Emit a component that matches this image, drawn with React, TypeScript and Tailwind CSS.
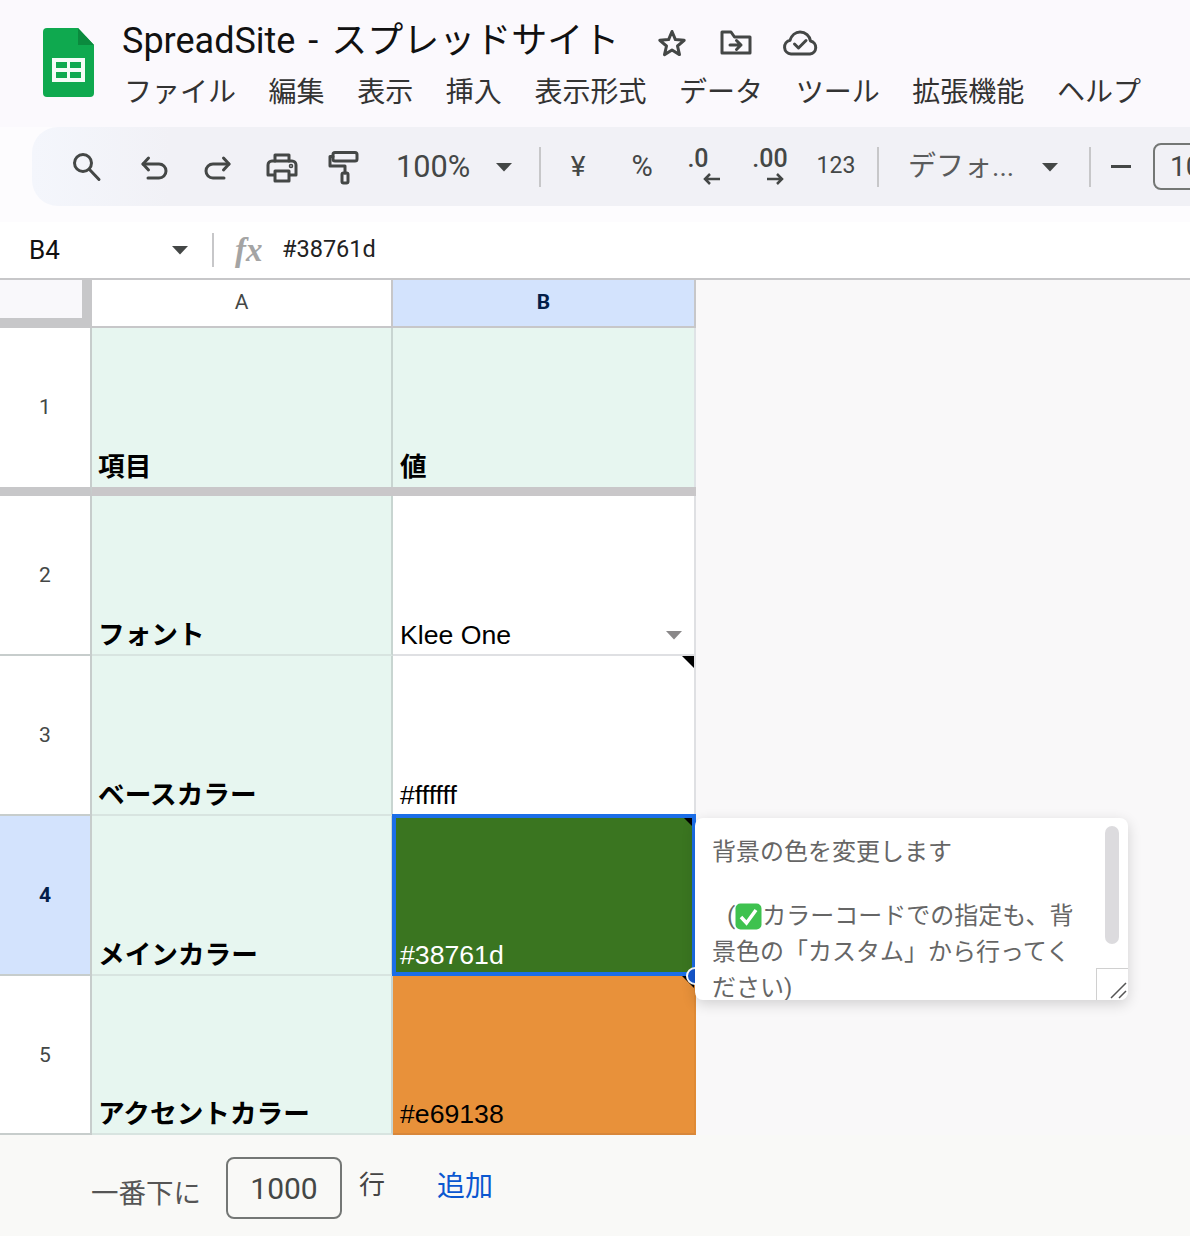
import React from "react";

const sans = "font-['Roboto','Noto_Sans_CJK_JP',sans-serif]";
const cellFont = "font-['Liberation_Sans','Noto_Sans_CJK_JP',sans-serif]";

function Tri({ className = "" }: { className?: string }) {
  return (
    <svg width="18" height="10" viewBox="0 0 18 10" className={className}>
      <path d="M1 1h16l-8 8.5z" fill="currentColor" />
    </svg>
  );
}

function Ic({ children }: { children: React.ReactNode }) {
  return (
    <svg width={34} height={34} viewBox="0 0 34 34" fill="none" stroke="#444746" strokeWidth="3" strokeLinecap="round" strokeLinejoin="round">
      {children}
    </svg>
  );
}

function Sep() {
  return <div className="w-[2px] h-[40px] bg-[#c7c7c9] shrink-0" />;
}

function Slot({ w, children, className = "" }: { w: number; children: React.ReactNode; className?: string }) {
  return (
    <div style={{ width: w }} className={`flex items-center justify-center shrink-0 ${className}`}>
      {children}
    </div>
  );
}

function Header() {
  const menus = ["ファイル", "編集", "表示", "挿入", "表示形式", "データ", "ツール", "拡張機能", "ヘルプ"];
  return (
    <div className="h-[127px] flex bg-[#fbf9fd] pl-[43px] pt-[28px] shrink-0">
      <svg width="51" height="69" viewBox="0 0 51 69" className="shrink-0">
        <path d="M4 0h31l16 17v48a4 4 0 0 1-4 4H4a4 4 0 0 1-4-4V4a4 4 0 0 1 4-4z" fill="#0fa94f" />
        <path d="M35 0l16 17H35z" fill="#0b8a3e" />
        <path d="M9 30h33v24H9z" fill="#f4fbf6" />
        <path d="M13 34h11v6H13zM27 34h11v6H27zM13 44h11v6H13zM27 44h11v6H27z" fill="#0fa94f" />
      </svg>
      <div className="ml-[28px] flex flex-col">
        <div className="flex items-center h-[32px] mt-[-3px]">
          <span className={`${sans} text-[36px] [word-spacing:4px] leading-[40px] text-[#111] whitespace-nowrap w-[491px]`}>SpreadSite - スプレッドサイト</span>
          <div className="flex items-center ml-[44px] mt-[4px]">
            <svg width="30" height="30" viewBox="0 0 30 30" fill="none" stroke="#444746" strokeWidth="3" strokeLinejoin="round">
              <path d="M15 3.500l3.400 8.100 8.800.7-6.700 5.700 2 8.600-7.500-4.600-7.500 4.600 2-8.600-6.700-5.700 8.800-.7z" />
            </svg>
            <svg width="32" height="26" viewBox="0 0 32 26" fill="none" stroke="#444746" strokeWidth="3" strokeLinejoin="round" strokeLinecap="round" className="ml-[33px]">
              <path d="M2 3v20h28V7H14.500L11 2H2z" />
              <path d="M10 15h11M16.500 10.500l4.500 4.500-4.500 4.500" />
            </svg>
            <svg width="36" height="26" viewBox="0 0 36 26" fill="none" stroke="#444746" strokeWidth="3" strokeLinejoin="round" strokeLinecap="round" className="ml-[30px]">
              <path d="M9 24a7 7 0 0 1-1-13.800C9.500 5.500 13.500 2 18 2c5.500 0 9.800 4 10.500 9a6.600 6.600 0 0 1-.5 13z" />
              <path d="M12.500 14l4 4 7.500-7.500" />
            </svg>
          </div>
        </div>
        <div className={`${sans} flex gap-[32.600px] text-[28px] leading-[40px] text-[#333] ml-[2px] mt-[16px] whitespace-nowrap`}>
          {menus.map((m) => (
            <span key={m}>{m}</span>
          ))}
        </div>
      </div>
    </div>
  );
}

function Toolbar() {
  return (
    <div className="h-[95px] bg-[#fdfcfe] pl-[32px] shrink-0">
      <div className={`${sans} h-[79px] bg-[linear-gradient(90deg,#f4f6fc,#f1f1f6_12%)] rounded-l-[26px] flex items-center pl-[32px] overflow-hidden whitespace-nowrap text-[#444746]`}>
        <Slot w={44}>
          <Ic>
            <circle cx="14" cy="13" r="8.500" />
            <path d="M20.500 19.500L30 29.500" />
          </Ic>
        </Slot>
        <Slot w={64} className="ml-[14px] mt-[4px]">
          <Ic>
            <path d="M6 12h16a6.500 6.500 0 0 1 0 14H11" />
            <path d="M11.500 6L6 12l5.500 6" />
          </Ic>
        </Slot>
        <Slot w={64} className="mt-[4px]">
          <Ic>
            <path d="M28 12H12a6.500 6.500 0 0 0 0 14h11" />
            <path d="M22.500 6L28 12l-5.500 6" />
          </Ic>
        </Slot>
        <Slot w={64} className="mt-[2px]">
          <Ic>
            <path d="M10 10V4h14v6" />
            <path d="M9 24H3V14a4 4 0 0 1 4-4h20a4 4 0 0 1 4 4v10h-6" />
            <path d="M10 20h14v10H10z" />
            <circle cx="26" cy="15" r=".8" />
          </Ic>
        </Slot>
        <Slot w={62} className="mt-[2px]">
          <Ic>
            <rect x="5" y="1.500" width="24" height="8.500" rx="2" />
            <path d="M5 5.500H2V15h15v7" />
            <rect x="14" y="22" width="6" height="10" rx="1.500" />
          </Ic>
        </Slot>
        <span className="text-[30.700px] ml-[20px] w-[73px] mt-[2px] shrink-0">100%</span>
        <Slot w={70}>
          <Tri />
        </Slot>
        <Sep />
        <span className="text-[28px] w-[74px] text-center shrink-0">¥</span>
        <span className="text-[29px] w-[54px] text-center shrink-0">%</span>
        <div className="w-[66px] flex flex-col items-center shrink-0">
          <span className="text-[25px] leading-[24px] font-medium ml-[-8px]">.0</span>
          <svg width="20" height="14" viewBox="0 0 20 14" fill="none" stroke="#444746" strokeWidth="2.500" className="ml-[20px] mt-[1px]">
            <path d="M18 7H3M8 2L3 7l5 5" />
          </svg>
        </div>
        <div className="w-[70px] flex flex-col items-center shrink-0">
          <span className="text-[25px] leading-[24px] font-medium">.00</span>
          <svg width="20" height="14" viewBox="0 0 20 14" fill="none" stroke="#444746" strokeWidth="2.500" className="ml-[10px] mt-[1px]">
            <path d="M2 7h15M12 2l5 5-5 5" />
          </svg>
        </div>
        <span className="text-[23px] w-[62px] mr-[10px] text-center shrink-0">123</span>
        <Sep />
        <span className="text-[28px] ml-[29px] w-[105px] text-[#5a5b5c] shrink-0">デフォ...</span>
        <Slot w={64} className="ml-[5px]">
          <Tri />
        </Slot>
        <div className="ml-[7px]">
          <Sep />
        </div>
        <div className="w-[20px] h-[3px] bg-[#444746] ml-[20px] shrink-0" />
        <div className="ml-[22px] w-[80px] h-[47px] border-2 border-[#747775] rounded-[8px] text-[28px] leading-[43px] pl-[15px] shrink-0">10</div>
      </div>
    </div>
  );
}

function FormulaBar() {
  return (
    <div className="h-[58px] bg-white border-b-2 border-[#c7c7c9] flex items-center shrink-0">
      <span className={`${sans} text-[26px] text-[#111] ml-[29px] w-[142px]`}>B4</span>
      <Tri className="text-[#444746]" />
      <div className="w-[2px] h-[34px] bg-[#c7c7c9] ml-[23px]" />
      <span className="font-['Liberation_Serif',serif] italic font-bold text-[33px] leading-[40px] text-[#a4a4a4] ml-[21px] w-[47px]">fx</span>
      <span className={`${sans} text-[23.500px] text-[#222]`}>#38761d</span>
    </div>
  );
}

function Note() {
  return (
    <svg width="12" height="12" viewBox="0 0 12 12" className="absolute top-0 right-0">
      <path d="M0 0h12v12z" fill="#000" />
    </svg>
  );
}

function Cell({
  text,
  bold,
  bg,
  color = "#000",
  note,
  borderRight = "#c8d5d1",
  borderBottom = "#d8e4e0",
  colB,
  band,
  children,
}: {
  text: string;
  bold?: boolean;
  bg: string;
  color?: string;
  note?: boolean;
  borderRight?: string;
  borderBottom?: string;
  colB?: boolean;
  band?: boolean;
  children?: React.ReactNode;
}) {
  return (
    <div
      style={{ backgroundColor: bg, color, borderRightColor: borderRight, borderBottomColor: borderBottom }}
      className={`${cellFont} relative flex items-end ${colB ? "pl-[7px]" : "pl-[6px]"} ${band ? "pb-[9px]" : "pb-[1px]"} border-r-2 border-b-2 text-[26.670px] leading-[36px] whitespace-nowrap ${bold ? "font-bold" : ""}`}
    >
      {text}
      {note && <Note />}
      {children}
    </div>
  );
}

function RowHead({ n, active }: { n: number; active?: boolean }) {
  return (
    <div
      className={`${sans} flex items-center justify-center border-r-2 border-b-2 border-[#c7cdcc] text-[21px] pt-[2px] ${
        active ? "bg-[#d3e3fd] text-[#041e49] font-bold" : "bg-white text-[#444746]"
      }`}
    >
      {n}
    </div>
  );
}

function Grid() {
  const mint = "#e7f6f0";
  return (
    <div className="flex flex-1 min-h-0 bg-[#f9f8f9]">
      <div className="relative">
        <div className="grid grid-cols-[92px_301px_303px] grid-rows-[48px_168px_160px_160px_160px_159px]">
          <div className="bg-[#c7c7c9] pr-[10px] pb-[10px]">
            <div className="h-full bg-[#f9f8fb]" />
          </div>
          <div className={`${sans} bg-white border-r-2 border-b-2 border-[#c7c7c9] flex items-center justify-center text-[21px] text-[#444746]`}>A</div>
          <div className={`${sans} bg-[#d3e3fd] border-r-2 border-b-2 border-[#c7c7c9] flex items-center justify-center text-[21px] font-bold text-[#041e49]`}>B</div>

          <div className="bg-white border-b-[9px] border-r-2 border-[#c7c7c9] border-r-[#c7cdcc]">
            <div className={`${sans} h-full flex items-center justify-center text-[21px] text-[#444746]`}>1</div>
          </div>
          <Cell text="項目" bold bg={mint} band borderBottom="#c7c7c9">
            <div className="absolute left-0 right-[-2px] bottom-[-2px] h-[9px] bg-[#c9c7c9]" />
          </Cell>
          <Cell text="値" bold bg={mint} band colB borderRight="#dfe3e6" borderBottom="#c7c7c9">
            <div className="absolute left-0 right-[-2px] bottom-[-2px] h-[9px] bg-[#c9c7c9]" />
          </Cell>

          <RowHead n={2} />
          <Cell text="フォント" bold bg={mint} />
          <Cell text="Klee One" colB bg="#fff" borderRight="#dfe0e3" borderBottom="#dfe0e3">
            <Tri className="absolute right-[11px] bottom-[14px] text-[#8a8889]" />
          </Cell>

          <RowHead n={3} />
          <Cell text="ベースカラー" bold bg={mint} />
          <Cell text="#ffffff" colB bg="#fff" note borderRight="#dfe0e3" borderBottom="#dfe0e3" />

          <RowHead n={4} active />
          <Cell text="メインカラー" bold bg={mint} />
          <Cell text="#38761d" colB bg="#3a7520" color="#fff" note borderRight="#3a7520" borderBottom="#3a7520">
            <div className="absolute inset-[-2px_-2px_-2px_-1px] border-[4px] border-[#1b6ee8]" />
          </Cell>

          <RowHead n={5} />
          <Cell text="アクセントカラー" bold bg={mint} />
          <Cell text="#e69138" colB bg="#e8913a" note borderRight="#e08a35" borderBottom="#d8873a" />
        </div>

        <div className="absolute left-[686px] top-[687px] w-[18px] h-[18px] rounded-full bg-[#1558d0] border-2 border-white" />

        <div className={`${sans} absolute left-[695px] top-[538px] w-[433px] h-[182px] bg-white rounded-[8px] shadow-[0_4px_14px_rgba(0,0,0,0.16)] overflow-hidden`}>
          <div className="pl-[17px] pt-[16px] text-[24px] leading-[36px] text-[#666] whitespace-nowrap">
            <div>背景の色を変更します</div>
            <div className="h-[28px]" />
            <div className="flex items-center pl-[15px]">
              <span>(</span>
              <svg width="27" height="27" viewBox="0 0 27 27">
                <rect x="0.500" y="0.500" width="26" height="26" rx="5" fill="#3ec24f" />
                <path d="M6 14l5.500 6L21 7" fill="none" stroke="#fff" strokeWidth="3.500" />
              </svg>
              <span>カラーコードでの指定も、背</span>
            </div>
            <div>景色の「カスタム」から行ってく</div>
            <div>ださい)</div>
          </div>
          <div className="absolute right-[9px] top-[8px] w-[14px] h-[118px] rounded-full bg-[#dcdbde]" />
          <div className="absolute right-0 bottom-0 w-[32px] h-[32px] bg-white border-l border-t border-[#d0d0d0]">
            <svg width="30" height="30" viewBox="0 0 30 30" fill="none" stroke="#555" strokeWidth="1.500">
              <path d="M14 29L29 14M22 29l7-7" />
            </svg>
          </div>
        </div>
      </div>
    </div>
  );
}

function Footer() {
  return (
    <div className={`${sans} h-[101px] bg-[#f9f9f7] flex items-start pl-[91px] shrink-0 whitespace-nowrap`}>
      <span className="text-[27.500px] leading-[38px] text-[#555] mt-[40px]">一番下に</span>
      <div className="ml-[25px] mt-[22px] w-[116px] h-[62px] border-2 border-[#747775] rounded-[8px] flex items-center justify-center text-[30px] text-[#444746]">1000</div>
      <span className="text-[26px] leading-[38px] text-[#444] ml-[17px] mt-[31px]">行</span>
      <span className="text-[28px] leading-[40px] text-[#0b57d0] ml-[52px] mt-[32px]">追加</span>
    </div>
  );
}

export default function App() {
  return (
    <div className="w-[1190px] h-[1236px] flex flex-col overflow-hidden bg-white">
      <Header />
      <Toolbar />
      <FormulaBar />
      <Grid />
      <Footer />
    </div>
  );
}
